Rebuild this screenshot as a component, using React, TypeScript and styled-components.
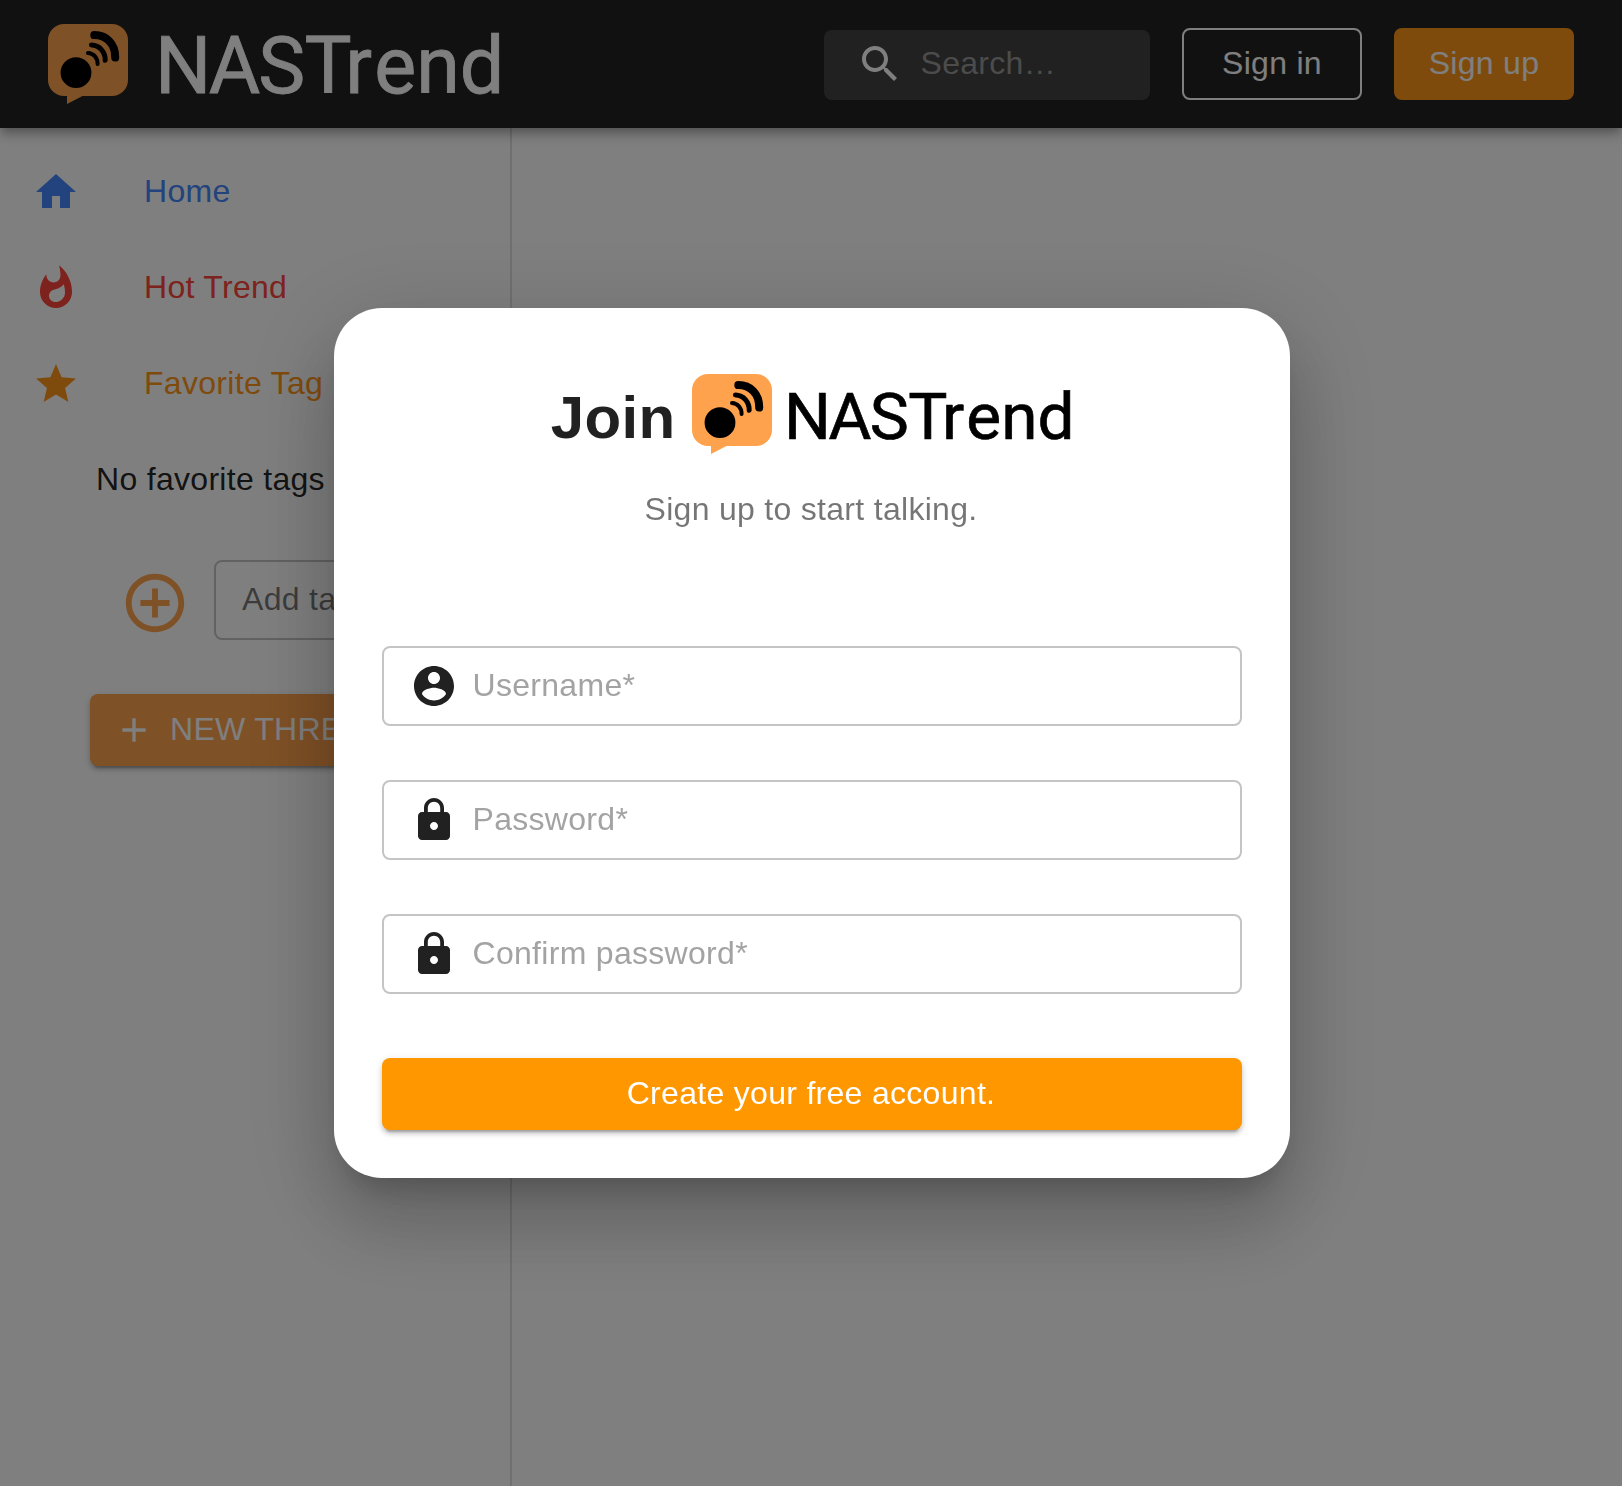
import React from "react";
import styled, { createGlobalStyle } from "styled-components";

const GlobalStyle = createGlobalStyle`
  *, *::before, *::after { box-sizing: border-box; }
  html, body { margin: 0; padding: 0; }
  body {
    background: #fff;
    color: rgba(0, 0, 0, 0.87);
    font-family: "Liberation Sans", Helvetica, Arial, sans-serif;
    font-size: 32px;
    line-height: 1;
    letter-spacing: 0.3px;
    overflow: hidden;
  }
`;

const paths = {
  home: "M10 20v-6h4v6h5v-8h3L12 3 2 12h3v8z",
  hot: "M13.5.67s.74 2.65.74 4.8c0 2.06-1.35 3.73-3.41 3.73-2.07 0-3.63-1.67-3.63-3.73l.03-.36C5.21 7.51 4 10.62 4 14c0 4.42 3.58 8 8 8s8-3.58 8-8C20 8.61 17.41 3.8 13.5.67zM11.71 19c-1.78 0-3.22-1.4-3.22-3.14 0-1.62 1.05-2.76 2.81-3.12 1.77-.36 3.6-1.21 4.62-2.58.39 1.29.59 2.65.59 4.04 0 2.65-2.15 4.8-4.8 4.8z",
  star: "M12 17.27L18.18 21l-1.64-7.03L22 9.24l-7.19-.61L12 2 9.19 8.63 2 9.24l5.46 4.73L5.82 21z",
  addCircle:
    "M13 7h-2v4H7v2h4v4h2v-4h4v-2h-4V7zm-1-5C6.48 2 2 6.48 2 12s4.48 10 10 10 10-4.48 10-10S17.52 2 12 2zm0 18c-4.41 0-8-3.59-8-8s3.59-8 8-8 8 3.59 8 8-3.59 8-8 8z",
  add: "M19 13h-6v6h-2v-6H5v-2h6V5h2v6h6v2z",
  search:
    "M15.5 14h-.79l-.28-.27C15.41 12.59 16 11.11 16 9.5 16 5.91 13.09 3 9.5 3S3 5.91 3 9.5 5.91 16 9.5 16c1.61 0 3.09-.59 4.23-1.57l.27.28v.79l5 4.99L20.49 19l-4.99-5zm-6 0C7.01 14 5 11.99 5 9.5S7.01 5 9.5 5 14 7.01 14 9.5 11.99 14 9.5 14z",
  account:
    "M12 2C6.48 2 2 6.48 2 12s4.48 10 10 10 10-4.48 10-10S17.52 2 12 2zm0 3c1.66 0 3 1.34 3 3s-1.34 3-3 3-3-1.34-3-3 1.34-3 3-3zm0 14.2c-2.5 0-4.71-1.28-6-3.22.03-1.99 4-3.08 6-3.08 1.99 0 5.97 1.09 6 3.08-1.29 1.94-3.5 3.22-6 3.22z",
  lock: "M18 8h-1V6c0-2.76-2.24-5-5-5S7 3.24 7 6v2H6c-1.1 0-2 .9-2 2v10c0 1.1.9 2 2 2h12c1.1 0 2-.9 2-2V10c0-1.1-.9-2-2-2zm-6 9c-1.1 0-2-.9-2-2s.9-2 2-2 2 .9 2 2-.9 2-2 2zm3.1-9H8.9V6c0-1.71 1.39-3.1 3.1-3.1 1.71 0 3.1 1.39 3.1 3.1v2z",
};

type IconName = keyof typeof paths;

const IconSvg = styled.svg<{ $size: number }>`
  display: block;
  flex: none;
  width: ${(p) => p.$size}px;
  height: ${(p) => p.$size}px;
  fill: currentColor;
`;

function Icon({ name, size = 48 }: { name: IconName; size?: number }) {
  return (
    <IconSvg $size={size} viewBox="0 0 24 24" aria-hidden="true">
      <path d={paths[name]} />
    </IconSvg>
  );
}

const Mark = styled.svg`
  display: block;
  flex: none;
  width: 80px;
  height: 80px;
`;

function LogoMark() {
  return (
    <Mark viewBox="0 0 80 80" aria-hidden="true">
      <path
        fill="#ffa24d"
        d="M16 0H64A16 16 0 0 1 80 16V56A16 16 0 0 1 64 72H34.5L19 80V72H16A16 16 0 0 1 0 56V16A16 16 0 0 1 16 0Z"
      />
      <circle cx="28" cy="48.7" r="15.4" />
      <g fill="none" stroke="#000" strokeLinecap="round">
        <path strokeWidth="8" d="M46.3 11.1C58 11 67.4 19.5 67.2 33.6" />
        <path strokeWidth="5" d="M43.5 20.9C51.5 21 57.4 28 57.2 36.3" />
        <path strokeWidth="4" d="M40 29.1C45.6 29.4 49.8 34 49.6 40" />
      </g>
    </Mark>
  );
}

const WordSvg = styled.svg<{ $scale: number }>`
  display: block;
  flex: none;
  overflow: visible;
  width: ${(p) => 341 * p.$scale}px;
  height: ${(p) => 60 * p.$scale}px;
  fill: currentColor;
  stroke: currentColor;
  stroke-width: 0.8px;
  font-family: Roboto, sans-serif;
  font-size: 79px;
  letter-spacing: 0;
`;

function Wordmark({ scale = 1 }: { scale?: number }) {
  return (
    <WordSvg $scale={scale} viewBox="0 0 341 60">
      <text y="58.8" x="-5 48.8 98.2 144.6 185.2 214.2 256.2 299.8">
        NASTrend
      </text>
    </WordSvg>
  );
}

/* Text sits slightly above the geometric centre of its row. */
const Label = styled.span`
  display: block;
  padding-bottom: 2px;
  white-space: nowrap;
`;

const Page = styled.div`
  display: flex;
  flex-direction: column;
  height: 1486px;
  overflow: hidden;
`;

const Header = styled.header`
  position: relative;
  z-index: 1;
  flex: none;
  display: flex;
  align-items: center;
  height: 128px;
  padding: 0 48px;
  color: #fff;
  background: #222;
  box-shadow: 0 4px 8px -2px rgba(0, 0, 0, 0.2), 0 8px 10px 0 rgba(0, 0, 0, 0.14),
    0 2px 20px 0 rgba(0, 0, 0, 0.12);
`;

const Brand = styled.div`
  display: flex;
  align-items: center;
  gap: 32px;
  margin-right: auto;
`;

const SearchBox = styled.div`
  display: flex;
  align-items: center;
  gap: 16.5px;
  width: 326px;
  height: 70px;
  margin-top: 2px;
  padding: 0 32px 2px;
  border-radius: 8px;
  background: rgba(255, 255, 255, 0.15);
`;

const Hint = styled(Label)<{ $color: string }>`
  color: ${(p) => p.$color};
`;

const HeaderButton = styled.button<{ $filled?: boolean }>`
  display: flex;
  align-items: center;
  justify-content: center;
  width: 180px;
  height: 72px;
  margin-left: 32px;
  padding: 0;
  border: ${(p) => (p.$filled ? "0" : "2px solid #fff")};
  border-radius: 8px;
  color: #fff;
  background: ${(p) => (p.$filled ? "#ff9618" : "transparent")};
  font: inherit;
  letter-spacing: 0.3px;
`;

const Body = styled.div`
  flex: 1;
  display: flex;
`;

const Sidebar = styled.aside`
  width: 512px;
  padding-top: 16px;
  border-right: 2px solid rgba(0, 0, 0, 0.12);
`;

const NavItem = styled.a<{ $color: string }>`
  display: flex;
  align-items: center;
  gap: 64px;
  height: 96px;
  padding-left: 32px;
  color: ${(p) => p.$color};
`;

const EmptyTags = styled.div`
  display: flex;
  align-items: center;
  height: 96px;
  padding-left: 96px;
`;

const AddTagRow = styled.div`
  display: flex;
  gap: 24px;
  padding: 32px 32px 0 120px;
`;

const AddTagIcon = styled.span`
  padding-top: 8px;
  color: #ffa24d;
`;

const TagInput = styled.div`
  flex: 1;
  display: flex;
  align-items: center;
  height: 80px;
  padding-left: 26px;
  border: 2px solid rgba(0, 0, 0, 0.23);
  border-radius: 8px;
`;

const raised = `
  box-shadow: 0 6px 2px -4px rgba(0, 0, 0, 0.2), 0 4px 4px 0 rgba(0, 0, 0, 0.14),
    0 2px 10px 0 rgba(0, 0, 0, 0.12);
`;

const NewThread = styled.button`
  display: flex;
  align-items: center;
  gap: 16px;
  width: 332px;
  height: 72px;
  margin: 54px 0 0 90px;
  padding: 0 24px;
  border: 0;
  border-radius: 8px;
  color: #fff;
  background: #ffa24d;
  font: inherit;
  letter-spacing: 0.3px;
  ${raised}
`;

const Backdrop = styled.div`
  position: fixed;
  inset: 0;
  z-index: 2;
  display: flex;
  align-items: center;
  justify-content: center;
  padding-left: 2px;
  background: rgba(0, 0, 0, 0.5);
`;

const Dialog = styled.section`
  display: flex;
  flex-direction: column;
  width: 956px;
  height: 870px;
  padding: 66px 48px 48px;
  border-radius: 48px;
  background: #fff;
  box-shadow: 0 22px 30px -14px rgba(0, 0, 0, 0.2), 0 48px 76px 6px rgba(0, 0, 0, 0.14),
    0 18px 92px 16px rgba(0, 0, 0, 0.12);
`;

const Title = styled.h1`
  display: flex;
  align-items: center;
  justify-content: center;
  gap: 16px;
  height: 80px;
  margin: 0;
  padding-right: 2px;
  font-size: 60px;
  font-weight: 700;
  letter-spacing: 0;
`;

const TitleWord = styled.span`
  padding-top: 7px;
  letter-spacing: 0.4px;
`;

const BlackWord = styled.span`
  padding-top: 1px;
  font-weight: 400;
  color: #000;
`;

const Subtitle = styled.p`
  margin: 39px 0 0;
  padding-right: 2px;
  text-align: center;
  color: rgba(0, 0, 0, 0.54);
`;

const Fields = styled.div`
  display: flex;
  flex-direction: column;
  gap: 54px;
  margin-top: auto;
`;

const Field = styled.div`
  display: flex;
  align-items: center;
  gap: 14.5px;
  height: 80px;
  padding: 0 26px;
  border: 2px solid rgba(0, 0, 0, 0.23);
  border-radius: 8px;
`;

const Submit = styled.button`
  display: flex;
  flex: none;
  align-items: center;
  justify-content: center;
  height: 72px;
  margin-top: 64px;
  padding: 0 2px 0 0;
  border: 0;
  border-radius: 8px;
  color: #fff;
  background: #ff9800;
  font: inherit;
  letter-spacing: 0.3px;
  ${raised}
`;

const navItems: { icon: IconName; label: string; color: string }[] = [
  { icon: "home", label: "Home", color: "#4486fa" },
  { icon: "hot", label: "Hot Trend", color: "#fa4438" },
  { icon: "star", label: "Favorite Tag", color: "#ff9618" },
];

const fields: { icon: IconName; label: string }[] = [
  { icon: "account", label: "Username*" },
  { icon: "lock", label: "Password*" },
  { icon: "lock", label: "Confirm password*" },
];

export default function App() {
  return (
    <>
      <GlobalStyle />
      <Page>
        <Header>
          <Brand>
            <LogoMark />
            <Wordmark />
          </Brand>
          <SearchBox>
            <Icon name="search" />
            <Hint $color="#989898">Search…</Hint>
          </SearchBox>
          <HeaderButton>
            <Label>Sign in</Label>
          </HeaderButton>
          <HeaderButton $filled>
            <Label>Sign up</Label>
          </HeaderButton>
        </Header>
        <Body>
          <Sidebar>
            {navItems.map((item) => (
              <NavItem key={item.label} $color={item.color}>
                <Icon name={item.icon} />
                <Label>{item.label}</Label>
              </NavItem>
            ))}
            <EmptyTags>
              <Label>No favorite tags</Label>
            </EmptyTags>
            <AddTagRow>
              <AddTagIcon>
                <Icon name="addCircle" size={70} />
              </AddTagIcon>
              <TagInput>
                <Hint $color="rgba(0, 0, 0, 0.54)">Add tag</Hint>
              </TagInput>
            </AddTagRow>
            <NewThread>
              <Icon name="add" size={40} />
              <Label>NEW THREAD</Label>
            </NewThread>
          </Sidebar>
        </Body>
      </Page>
      <Backdrop>
        <Dialog>
          <Title>
            <TitleWord>Join</TitleWord>
            <LogoMark />
            <BlackWord>
              <Wordmark scale={0.832} />
            </BlackWord>
          </Title>
          <Subtitle>Sign up to start talking.</Subtitle>
          <Fields>
            {fields.map((field) => (
              <Field key={field.label}>
                <Icon name={field.icon} />
                <Hint $color="#a3a3a3">{field.label}</Hint>
              </Field>
            ))}
          </Fields>
          <Submit>
            <Label>Create your free account.</Label>
          </Submit>
        </Dialog>
      </Backdrop>
    </>
  );
}
